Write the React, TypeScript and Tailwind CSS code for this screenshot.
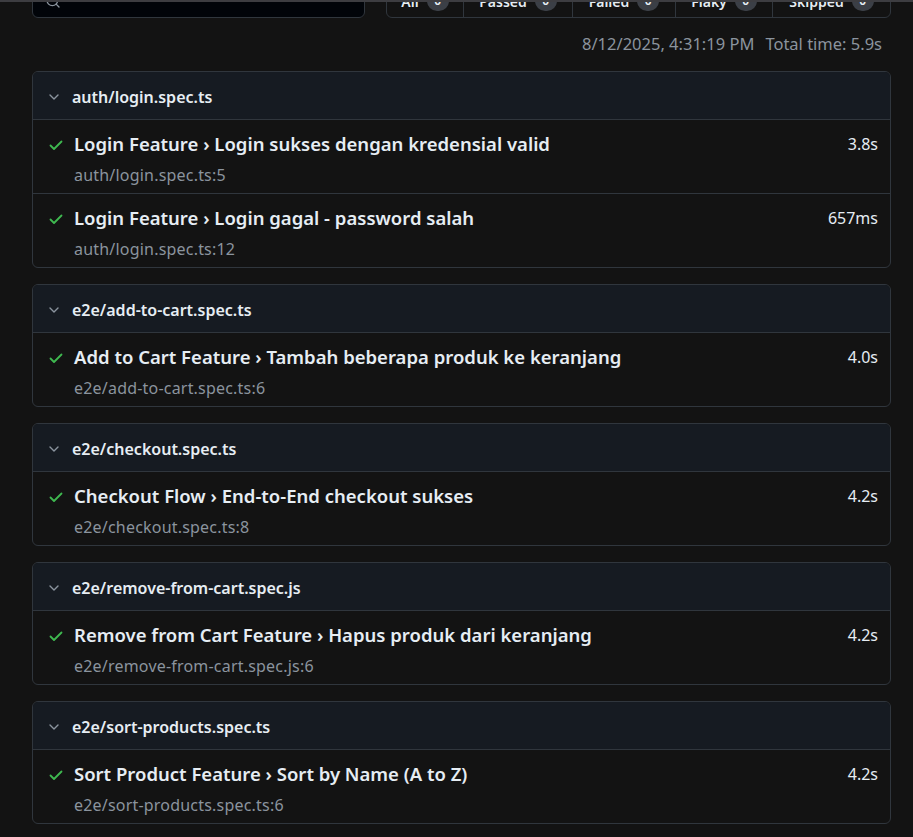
import { Search } from 'lucide-react'

interface TestRow {
  title: string
  location: string
  duration: string
}

interface FileGroup {
  file: string
  tests: TestRow[]
}

const groups: FileGroup[] = [
  {
    file: 'auth/login.spec.ts',
    tests: [
      { title: 'Login Feature › Login sukses dengan kredensial valid', location: 'auth/login.spec.ts:5', duration: '3.8s' },
      { title: 'Login Feature › Login gagal - password salah', location: 'auth/login.spec.ts:12', duration: '657ms' },
    ],
  },
  {
    file: 'e2e/add-to-cart.spec.ts',
    tests: [
      { title: 'Add to Cart Feature › Tambah beberapa produk ke keranjang', location: 'e2e/add-to-cart.spec.ts:6', duration: '4.0s' },
    ],
  },
  {
    file: 'e2e/checkout.spec.ts',
    tests: [{ title: 'Checkout Flow › End-to-End checkout sukses', location: 'e2e/checkout.spec.ts:8', duration: '4.2s' }],
  },
  {
    file: 'e2e/remove-from-cart.spec.js',
    tests: [
      { title: 'Remove from Cart Feature › Hapus produk dari keranjang', location: 'e2e/remove-from-cart.spec.js:6', duration: '4.2s' },
    ],
  },
  {
    file: 'e2e/sort-products.spec.ts',
    tests: [{ title: 'Sort Product Feature › Sort by Name (A to Z)', location: 'e2e/sort-products.spec.ts:6', duration: '4.2s' }],
  },
]

const filters = [
  { label: 'All', w: 'w-[76px]' },
  { label: 'Passed', w: 'w-[109px]' },
  { label: 'Failed', w: 'w-[103px]' },
  { label: 'Flaky', w: 'w-[97px]' },
  { label: 'Skipped', w: 'flex-1' },
]

function Chevron() {
  return (
    <svg width="16" height="16" viewBox="0 0 16 16" className="text-[#8b949e]">
      <path d="M4 6l4 4 4-4" fill="none" stroke="currentColor" strokeWidth="1.4" strokeLinecap="round" strokeLinejoin="round" />
    </svg>
  )
}

function Check() {
  return (
    <svg width="16" height="16" viewBox="0 0 16 16" className="text-[#3fb950]">
      <path d="M2.5 8.5l3.5 3.5 7.5-7.5" fill="none" stroke="currentColor" strokeWidth="1.8" strokeLinecap="round" strokeLinejoin="round" />
    </svg>
  )
}

export default function App() {
  return (
    <main
      className="min-h-screen bg-[#131313] text-[#e6edf3]"
      style={{ fontFamily: '"Noto Sans", "Open Sans", sans-serif' }}
    >
      <div className="h-[2px] bg-[#3d3d41]"></div>

      {/* Toolbar (scrolled mostly out of view) */}
      <div className="pl-8 pr-[22px] h-[16px] overflow-hidden flex items-end gap-[21px]">
        <div className="w-[333px] h-[34px] shrink-0 bg-[#010409] border border-[#30363d] rounded-md flex items-center px-3">
          <Search size={16} className="text-[#8b949e]" />
        </div>
        <div className="flex-1 h-[34px] border border-[#30363d] rounded-md flex">
          {filters.map((f, i) => (
            <div
              key={f.label}
              className={`${f.w} flex items-center justify-center gap-2 text-[14px] font-semibold ${i > 0 ? 'border-l border-[#30363d]' : ''}`}
            >
              {f.label}
              <span className="w-[22px] h-[20px] rounded-full bg-[#3b3f46] text-[12px] flex items-center justify-center">0</span>
            </div>
          ))}
        </div>
      </div>

      <div className="pl-8 pr-[31px] h-[53px] flex items-center justify-end gap-[11px] text-[16.5px] text-[#8b949e]">
        <span>8/12/2025, 4:31:19 PM</span>
        <span>Total time: 5.9s</span>
      </div>

      <div className="pl-8 pr-[22px] flex flex-col gap-4 pb-6">
        {groups.map((g) => (
          <div key={g.file} className="border border-[#30363d] rounded-md overflow-hidden">
            <div className="h-[48px] bg-[#161b22] border-b border-[#30363d] flex items-center pl-[13px] pt-[2px] gap-[10px]">
              <Chevron />
              <span className="text-[16px] font-semibold">{g.file}</span>
            </div>
            {g.tests.map((t, i) => (
              <div
                key={t.location}
                className={`flex pl-[15px] pr-3 pt-[10px] ${i > 0 ? 'h-[74px] border-t border-[#30363d]' : 'h-[73px]'}`}
              >
                <div className="pt-[7px] mr-[10px]">
                  <Check />
                </div>
                <div className="flex-1">
                  <div className="text-[18.5px] font-semibold leading-[28px]">{t.title}</div>
                  <div className="text-[16px] text-[#8b949e] leading-[24px] mt-[5px] tracking-[0.2px]">{t.location}</div>
                </div>
                <div className="text-[16px] leading-[28px]">{t.duration}</div>
              </div>
            ))}
          </div>
        ))}
      </div>
    </main>
  )
}
